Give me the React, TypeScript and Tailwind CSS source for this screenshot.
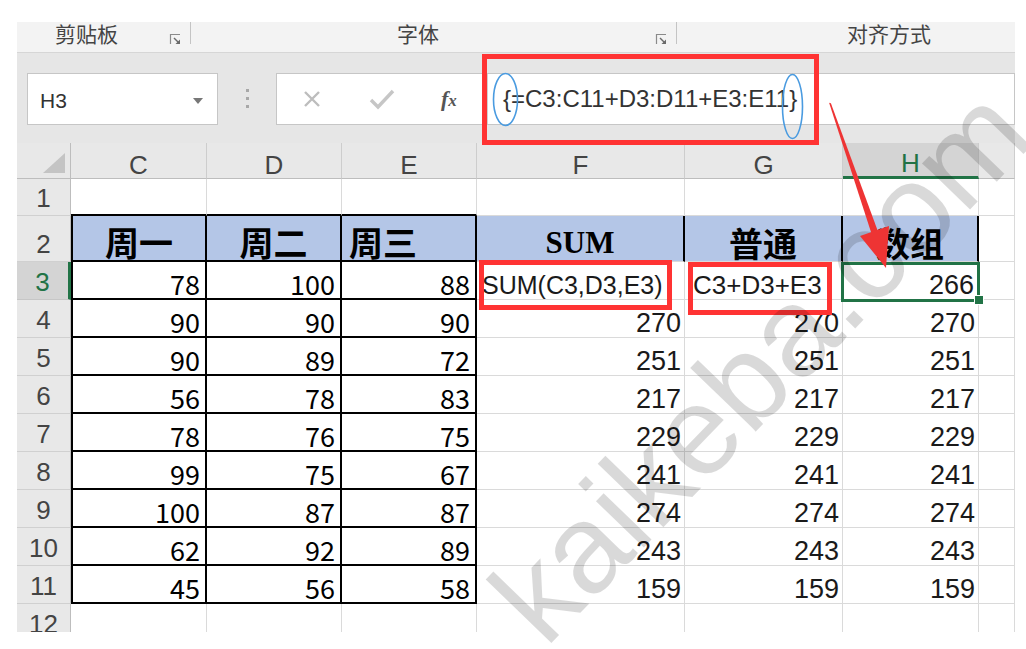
import clsx from "clsx";

const left: number[][] = [
  [78, 100, 88],
  [90, 90, 90],
  [90, 89, 72],
  [56, 78, 83],
  [78, 76, 75],
  [99, 75, 67],
  [100, 87, 87],
  [62, 92, 89],
  [45, 56, 58],
];
const totals = [266, 270, 251, 217, 229, 241, 274, 243, 159];
const letters = ["C", "D", "E", "F", "G", "H", ""];
const heads = ["周一", "周二", "周三", "SUM", "普通", "数组"];

const sans = "font-['Liberation_Sans',Arial,sans-serif]";
const cjk = "font-['Noto_Sans_CJK_SC',sans-serif]";

function Launcher() {
  return (
    <svg width="12" height="12" viewBox="0 0 12 12" className="mt-[11px]">
      <path d="M1.5 11V1.5H11" fill="none" stroke="#8a8a8a" strokeWidth="1.2" />
      <path d="M5 5l5 5" stroke="#6a6a6a" strokeWidth="1.4" />
      <path d="M11 11H6.5L11 6.5z" fill="#6a6a6a" />
    </svg>
  );
}

function Ribbon() {
  return (
    <div className={clsx("flex h-[31px] border-b border-[#d6d6d6] bg-[#f3f3f3] text-[21px] leading-none text-[#444]", cjk)}>
      <div className="flex w-[174px] items-start pl-[38px]">
        <span className="mt-px">剪贴板</span>
        <span className="ml-auto mr-[9px]">
          <Launcher />
        </span>
        <span className="h-[22px] w-px bg-[#c4c4c4]" />
      </div>
      <div className="flex w-[486px] items-start pl-[206px]">
        <span className="mt-px">字体</span>
        <span className="ml-auto mr-[9px]">
          <Launcher />
        </span>
        <span className="h-[22px] w-px bg-[#c4c4c4]" />
      </div>
      <div className="flex flex-1 items-start pl-[170px]">
        <span className="mt-px">对齐方式</span>
      </div>
    </div>
  );
}

function FormulaBar() {
  return (
    <div className={clsx("flex h-[90px] items-start bg-[#e6e6e6] pl-[10px] pt-[20px]", sans)}>
      <div className="flex h-[52px] w-[191px] items-center border border-[#c6c6c6] bg-white pl-[12px] pt-[3px] text-[21px] leading-none text-[#333]">
        <span>H3</span>
        <svg width="10" height="6" viewBox="0 0 10 6" className="ml-auto mr-[14px]">
          <path d="M0 0h10L5 6z" fill="#777" />
        </svg>
      </div>
      <div className="flex w-[58px] flex-col items-center gap-[5px] pt-[16px]">
        <span className="h-[3px] w-[3px] bg-[#a8a8a8]" />
        <span className="h-[3px] w-[3px] bg-[#a8a8a8]" />
        <span className="h-[3px] w-[3px] bg-[#a8a8a8]" />
      </div>
      <div className="flex h-[52px] flex-1 items-center border border-[#c6c6c6] bg-white">
        <div className="flex h-full w-[211px] items-center border-r border-[#d0d0d0]">
          <svg width="18" height="18" viewBox="0 0 18 18" className="ml-[26px]">
            <path d="M2 2l14 14M16 2L2 16" stroke="#bdbdbd" strokeWidth="2.4" />
          </svg>
          <svg width="26" height="22" viewBox="0 0 26 22" className="ml-[48px]">
            <path d="M2 12l7 7L24 3" fill="none" stroke="#c6c6c6" strokeWidth="3.4" />
          </svg>
          <span className="ml-[46px] font-['Liberation_Serif',serif] text-[22px] font-bold italic leading-none text-[#555]">
            f<span className="text-[17px]">x</span>
          </span>
        </div>
        <span className="pl-[15px] text-[24px] leading-none text-[#333]">{"{=C3:C11+D3:D11+E3:E11}"}</span>
      </div>
    </div>
  );
}

function HeaderRow() {
  return (
    <>
      <div className="flex items-start border-b border-r border-b-[#bdbdbd] border-r-[#bdbdbd] bg-[#e8e8e8]">
        <svg width="22" height="20" viewBox="0 0 22 20" className="ml-[26px] mt-[10px]">
          <path d="M22 0V20H0z" fill="#c4c4c4" />
        </svg>
      </div>
      {letters.map((l, i) => (
        <div
          key={l + i}
          className={clsx(
            "flex items-end justify-center border-r border-r-[#cdcdcd] text-[26px] leading-none",
            sans,
            l === "H"
              ? "border-b-[3px] border-b-[#217346] bg-[#d4d4d4] text-[#217346]"
              : "border-b border-b-[#bdbdbd] bg-[#e8e8e8] text-[#444]"
          )}
        >
          {l}
        </div>
      ))}
    </>
  );
}

function RowHead({ r }: { r: number }) {
  return (
    <div
      className={clsx(
        "flex items-end justify-center border-b pb-[4px] text-[26px] leading-none",
        sans,
        r === 3
          ? "border-r-[3px] border-b-[#c6c6c6] border-r-[#217346] bg-[#d4d4d4] text-[#217346]"
          : "border-r border-b-[#d0d0d0] border-r-[#bdbdbd] bg-[#e8e8e8] text-[#444]"
      )}
    >
      {r}
    </div>
  );
}

function Cell({ r, c }: { r: number; c: number }) {
  const block = r >= 2 && r <= 11 && c <= 2;
  const rightBlack = block || (r === 2 && c <= 5);
  const bottomBlack = block || (r === 1 && c <= 2);
  const base = clsx(
    "relative flex",
    rightBlack ? "border-r-2 border-r-black" : "border-r border-r-[#dadada]",
    bottomBlack ? "border-b-2 border-b-black" : "border-b border-b-[#dadada]",
    block && c === 0 && "border-l-2 border-l-black",
    r === 2 && c <= 5 && "bg-[#b4c6e7]"
  );

  if (r === 2 && c <= 5) {
    const text = heads[c];
    if (c === 3) {
      return (
        <div className={clsx(base, "items-end justify-center pb-[3px] font-['Liberation_Serif',serif] text-[31px] font-bold leading-none text-black")}>
          {text}
        </div>
      );
    }
    return (
      <div className={clsx(base, "items-end pb-px text-[34px] font-bold leading-none text-black", cjk, c === 2 ? "justify-start pl-[7px]" : "justify-center")}>
        {text}
      </div>
    );
  }

  if (r >= 3 && r <= 11 && c <= 2) {
    return (
      <div className={clsx(base, "items-end justify-end pb-px pr-[5px] text-[27px] leading-none text-black", cjk)}>
        {left[r - 3][c]}
      </div>
    );
  }

  if (r === 3 && c === 3) {
    return (
      <div className={clsx(base, "items-end pb-px pl-[5px] text-[25px] leading-none text-[#1a1a1a]", sans)}>
        <span className="whitespace-nowrap">SUM(C3,D3,E3)</span>
        <span className="absolute -top-[2px] bottom-[-11px] left-[2px] right-[12px] z-10 border-[5px] border-[#ff3333]" />
      </div>
    );
  }
  if (r === 3 && c === 4) {
    return (
      <div className={clsx(base, "items-end pb-px pl-[8px] text-[26px] leading-none text-[#1a1a1a]", sans)}>
        <span className="whitespace-nowrap">C3+D3+E3</span>
        <span className="absolute bottom-[-16px] left-[3px] right-[10px] top-0 z-10 border-[5px] border-[#ff3333]" />
      </div>
    );
  }
  if (r >= 3 && r <= 11 && c >= 3 && c <= 5) {
    if (r === 3 && c === 5) {
      return (
        <div className={clsx(base, "items-end justify-end pr-[4px] text-[27px] leading-none text-[#1a1a1a]", sans)}>
          {totals[0]}
          <span className="absolute -bottom-[3px] -left-[2px] -right-[2px] top-0 z-10 border-[3px] border-[#217346]" />
          <span className="absolute -bottom-[6px] -right-[6px] z-10 h-[10px] w-[10px] border border-white bg-[#217346]" />
        </div>
      );
    }
    return (
      <div className={clsx(base, "items-end justify-end pr-[3px] text-[27px] leading-none text-[#1a1a1a]", sans)}>
        {totals[r - 3]}
      </div>
    );
  }
  return <div className={base} />;
}

function Sheet() {
  const rows = Array.from({ length: 12 }, (_, i) => i + 1);
  return (
    <div className="h-[489px] overflow-hidden">
      <div className="grid grid-cols-[54px_136px_135px_135px_208px_158px_136px_36px] grid-rows-[36px_37px_46px_repeat(9,38px)_38px]">
        <HeaderRow />
        {rows.map((r) => (
          <div key={r} className="contents">
            <RowHead r={r} />
            {[0, 1, 2, 3, 4, 5, 6].map((c) => (
              <Cell key={c} r={r} c={c} />
            ))}
          </div>
        ))}
      </div>
    </div>
  );
}

export default function App() {
  return (
    <div className="relative h-[649px] w-[1026px] overflow-hidden bg-white">
      <div className="ml-[17px] w-[998px] pt-[22px]">
        <Ribbon />
        <FormulaBar />
        <Sheet />
      </div>

      {/* watermark */}
      <div className="pointer-events-none absolute left-[560px] top-[537px] z-20 origin-bottom-left -rotate-[46deg] whitespace-nowrap font-['Liberation_Sans',Arial,sans-serif] text-[126px] leading-none text-black/15">
        kaikeba.com
      </div>

      {/* annotations */}
      <div className="pointer-events-none absolute left-[482px] top-[54px] z-30 h-[91px] w-[337px] border-[5px] border-[#ff3333]" />
      <svg className="pointer-events-none absolute inset-0 z-30" width="1026" height="649" viewBox="0 0 1026 649">
        <ellipse cx="505.5" cy="99.5" rx="12" ry="26" fill="none" stroke="#4a9be0" strokeWidth="1.6" />
        <ellipse cx="792.5" cy="106.5" rx="10" ry="32" fill="none" stroke="#4a9be0" strokeWidth="1.6" />
        <polygon points="830.9,103.3 829.1,102.7 871.3,232.9 877.7,230.7" fill="#ee3434" />
        <polygon points="886,268 889,226 860,236" fill="#ee3434" />
      </svg>
    </div>
  );
}
